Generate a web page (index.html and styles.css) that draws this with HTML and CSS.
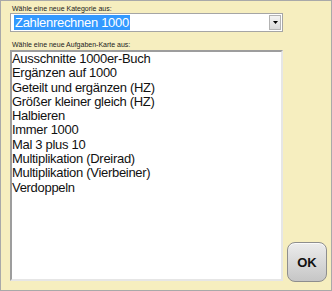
FILE: index.html
```html
<!DOCTYPE html>
<html lang="de">
<head>
  <meta charset="UTF-8">
  <title>Karte wählen</title>
  <link rel="stylesheet" href="styles.css">
</head>
<body>

<div class="panel">
  <div class="main">
    <label class="caption">Wähle eine neue Kategorie aus:</label>
    <div class="combo">
      <span class="combo-text"><span class="selected">Zahlenrechnen 1000</span></span>
      <span class="combo-btn">
        <svg width="5" height="3" viewBox="0 0 5 3"><path d="M0 0h5L2.5 3z" fill="#000"/></svg>
      </span>
    </div>

    <label class="caption second">Wähle eine neue Aufgaben-Karte aus:</label>
    <div class="listbox">
      <div class="item">Ausschnitte 1000er-Buch</div>
      <div class="item">Ergänzen auf 1000</div>
      <div class="item">Geteilt und ergänzen (HZ)</div>
      <div class="item">Größer kleiner gleich (HZ)</div>
      <div class="item">Halbieren</div>
      <div class="item">Immer 1000</div>
      <div class="item">Mal 3 plus 10</div>
      <div class="item">Multiplikation (Dreirad)</div>
      <div class="item">Multiplikation (Vierbeiner)</div>
      <div class="item">Verdoppeln</div>
    </div>
  </div>

  <div class="side">
    <button class="ok">OK</button>
  </div>
</div>

</body>
</html>
```

FILE: styles.css
```css
* {
  box-sizing: border-box;
}
body {
  margin: 0;
  font-family: 'Liberation Sans', Arial, sans-serif;
}
.panel {
  width: 332px;
  height: 291px;
  background: #f6eebf;
  border: 1px solid #a9a9a9;
  display: flex;
  padding: 3px 0 0 9px;
}
.main {
  width: 273px;
  display: flex;
  flex-direction: column;
}
.caption {
  display: block;
  height: 9px;
  margin-left: 2px;
  font-size: 7px;
  line-height: 9px;
  color: #222;
}
.second {
  margin-top: 8px;
}
.combo {
  height: 19px;
  background: white;
  border: 1px solid #a5a5a5;
  display: flex;
  align-items: center;
  padding: 0 1px 0 3px;
}
.combo-text {
  flex: 1;
  font-size: 13px;
  line-height: 15px;
  letter-spacing: -0.3px;
}
.selected {
  background: #3399ff;
  color: white;
  padding: 0 1px;
}
.combo-btn {
  width: 12px;
  height: 15px;
  background: linear-gradient(#f4f4f4, #dadada);
  border: 1px solid #b3b3b3;
  display: flex;
  align-items: center;
  justify-content: center;
}
.listbox {
  margin-top: 1px;
  height: 231px;
  background: white;
  border-top: 2px solid #9d9d9d;
  border-left: 2px solid #9d9d9d;
  border-right: 2px solid #e6e6e6;
  border-bottom: 2px solid #e6e6e6;
}
.item {
  font-size: 13px;
  line-height: 14.3px;
  letter-spacing: -0.3px;
  color: #111;
}
.side {
  flex: 1;
  display: flex;
  align-items: flex-end;
  justify-content: center;
  padding-bottom: 8px;
}
.ok {
  width: 40px;
  height: 40px;
  border: 1px solid #8e8e8e;
  border-radius: 8px;
  background: linear-gradient(#ececec, #c6c6c6);
  box-shadow: inset 0 1px 0 #fafafa;
  font-family: 'Liberation Sans', Arial, sans-serif;
  font-weight: bold;
  font-size: 13px;
  color: #111;
  padding: 0;
  cursor: pointer;
}
```
